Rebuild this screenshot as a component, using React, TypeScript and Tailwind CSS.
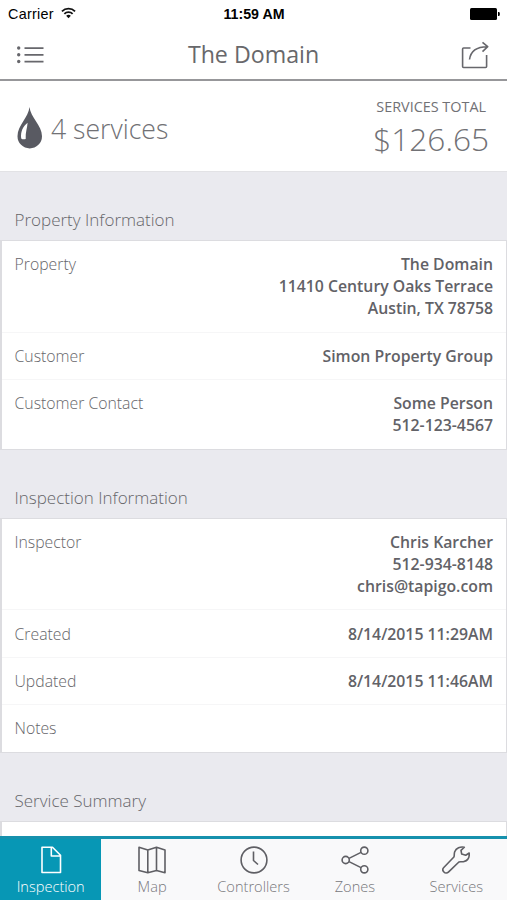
import type { ReactNode } from "react";

type Row = { label: string; lines: string[] };

const propertyRows: Row[] = [
  { label: "Property", lines: ["The Domain", "11410 Century Oaks Terrace", "Austin, TX 78758"] },
  { label: "Customer", lines: ["Simon Property Group"] },
  { label: "Customer Contact", lines: ["Some Person", "512-123-4567"] },
];

const inspectionRows: Row[] = [
  { label: "Inspector", lines: ["Chris Karcher", "512-934-8148", "chris@tapigo.com"] },
  { label: "Created", lines: ["8/14/2015 11:29AM"] },
  { label: "Updated", lines: ["8/14/2015 11:46AM"] },
  { label: "Notes", lines: [] },
];

function StatusBar() {
  return (
    <div className="grid h-7 grid-cols-3 items-center pr-[7px] pl-2 font-['Liberation_Sans',sans-serif] text-black">
      <div className="flex items-center gap-[7px] pt-px">
        <span className="text-[14.4px] tracking-[0.25px]">Carrier</span>
        <svg width="15" height="12" viewBox="0 0 16 12" fill="none" stroke="#111" strokeWidth="1.9" className="-mt-0.5">
          <path d="M1 4.3a10 10 0 0 1 14 0" />
          <path d="M3.6 7a6.2 6.2 0 0 1 8.8 0" />
          <path d="M8 11.6 5.5 9a3.6 3.6 0 0 1 5 0z" fill="#111" stroke="none" />
        </svg>
      </div>
      <span className="pt-px text-center text-[14.2px] font-bold whitespace-nowrap">11:59 AM</span>
      <svg className="justify-self-end" width="30" height="12" viewBox="0 0 30 12">
        <rect width="27" height="12" rx="1.5" />
        <path d="M28 4h.6a1.2 1.2 0 0 1 1.2 1.2v1.6A1.2 1.2 0 0 1 28.6 8H28z" />
      </svg>
    </div>
  );
}

function NavBar() {
  return (
    <div className="flex h-[53px] items-center justify-between border-b-2 border-[#97979a] pr-[18px] pl-4">
      <svg width="28" height="18" viewBox="0 0 28 18" fill="#67676c" className="mt-[3px]">
        <circle cx="2.7" cy="2" r="1.7" />
        <circle cx="2.7" cy="8.8" r="1.7" />
        <circle cx="2.7" cy="15.5" r="1.7" />
        <path d="M8.5 1.2h19v1.7h-19zM8.5 8h19v1.7h-19zM8.5 14.7h19v1.7h-19z" />
      </svg>
      <h1 className="pt-px pl-0.5 text-[23.2px] leading-[30px] text-[#68686b]">The Domain</h1>
      <svg width="28" height="28" viewBox="0 0 28 28" fill="none" stroke="#67676c" strokeWidth="1.6" strokeLinejoin="round" className="mt-0.5">
        <path d="M9.5 7H2.6a1 1 0 0 0-1 1v17.5a1 1 0 0 0 1 1h22a1 1 0 0 0 1-1V14" />
        <path d="M8.5 18.5C9.5 11 15 5.7 26.3 5.7M21.5 1.3l5.2 4.4-5.2 5" />
      </svg>
    </div>
  );
}

function Totals() {
  return (
    <div className="flex h-[91px] shrink-0 items-center justify-between border-b border-[#e2e2e5] bg-white pr-[18px] pl-[17px]">
      <div className="flex items-center gap-[8px] text-[#717175]">
        <svg width="26" height="42" viewBox="0 0 26 42" className="mt-[3px]">
          <path d="M12.5 0C13.5 10.5 25 18.5 25 29.2A12.2 12.2 0 0 1 .5 29.2C.5 18.5 11.5 10.5 12.5 0z" fill="#595a62" />
          <path d="M10.6 15.8C6 19.5 3.4 24.5 4.2 31.5q2 1.5 4.5.4C8.3 25.5 10.3 21 10.6 15.8z" fill="#fff" />
        </svg>
        <span className="mt-[5px] text-[26.6px] leading-9 font-light">4 services</span>
      </div>
      <div className="text-right text-[#717175]">
        <div className="mt-1 pr-[3px] text-[14.4px] leading-5">SERVICES TOTAL</div>
        <div className="mt-0.5 text-[31.6px] leading-10 font-light">$126.65</div>
      </div>
    </div>
  );
}

function Section({ title, rows }: { title: string; rows: Row[] }) {
  return (
    <section>
      <h2 className="flex h-[68.1px] items-end pb-[9px] pl-[14.5px] text-[17px] leading-[22px] font-light text-[#66666a]">
        {title}
      </h2>
      <div className="border border-l-2 border-[#dcdce0] bg-white">
        {rows.map((row) => (
          <div
            key={row.label}
            className="flex justify-between border-b border-[#f6f6f7] pt-[12.4px] pr-[13px] pb-[12.1px] pl-[12.5px] text-[15.8px] leading-[22px] last:border-b-0"
          >
            <span className="font-light text-[#66666a]">{row.label}</span>
            <div className="text-right font-semibold text-[#626267]">
              {row.lines.map((line) => (
                <div key={line}>{line}</div>
              ))}
            </div>
          </div>
        ))}
      </div>
    </section>
  );
}

function Tab({ label, active, children }: { label: string; active?: boolean; children: ReactNode }) {
  return (
    <div
      className={
        active
          ? "flex flex-1 flex-col items-center bg-[#0797b5] pt-[7px] text-white"
          : "flex flex-1 flex-col items-center pt-[7px] text-[#5f5f64]"
      }
    >
      <svg width="28" height="28" viewBox="0 0 28 28" fill="none" stroke="currentColor" strokeWidth="1.6" strokeLinejoin="round">
        {children}
      </svg>
      <span className={active ? "mt-[3px] text-[14.6px] leading-[19px] font-light" : "mt-[3px] text-[14.6px] leading-[19px] font-light text-[#77777b]"}>
        {label}
      </span>
    </div>
  );
}

function TabBar() {
  return (
    <nav className="flex h-16 shrink-0 border-t-[3px] border-[#1691ad] bg-[#f9f9fa]">
      <Tab label="Inspection" active>
        <path d="M5 1.2h10.5l8 8v17.3H5zM14.3 1.2V10h9" />
      </Tab>
      <Tab label="Map">
        <path d="M1 1.2 9.8 4l8.7-2.8L27 4v22.8l-8.5-2.3-8.7 2.3L1 24.5zM9.8 4v22.8M18.5 1.2v23.3" />
      </Tab>
      <Tab label="Controllers">
        <circle cx="14" cy="14" r="12.9" />
        <path d="M13.5 5.5v9l4.5 4" />
      </Tab>
      <Tab label="Zones">
        <circle cx="4.7" cy="14" r="3.6" />
        <circle cx="23.3" cy="4.7" r="3.6" />
        <circle cx="23.3" cy="23.3" r="3.6" />
        <path d="m8 12.4 12-6M8 15.6l12 6" />
      </Tab>
      <Tab label="Services">
        <path d="M22.3 1.2c-4-.9-8.2 1-9.6 4.6-.8 2.200-.1 3.600-.8 5.200L1.800 21.500c-1.300 1.400-1.100 3.300.1 4.500s3.200 1.400 4.500.1L16.900 16c1.800-.6 3.300.2 5.200-.4 3.600-1.200 5.500-4.600 5.100-8.600l-3.500 2.200-4-1.100-.7-3.700z" />
      </Tab>
    </nav>
  );
}

export default function App() {
  return (
    <div className="flex h-[900px] w-full flex-col overflow-hidden bg-[#eaeaef] font-['Open_Sans',sans-serif]">
      <header className="shrink-0 bg-white">
        <StatusBar />
        <NavBar />
      </header>
      <Totals />
      <main className="min-h-0 flex-1 overflow-hidden">
        <Section title="Property Information" rows={propertyRows} />
        <Section title="Inspection Information" rows={inspectionRows} />
        <Section title="Service Summary" rows={[{ label: "", lines: [] }]} />
      </main>
      <TabBar />
    </div>
  );
}
